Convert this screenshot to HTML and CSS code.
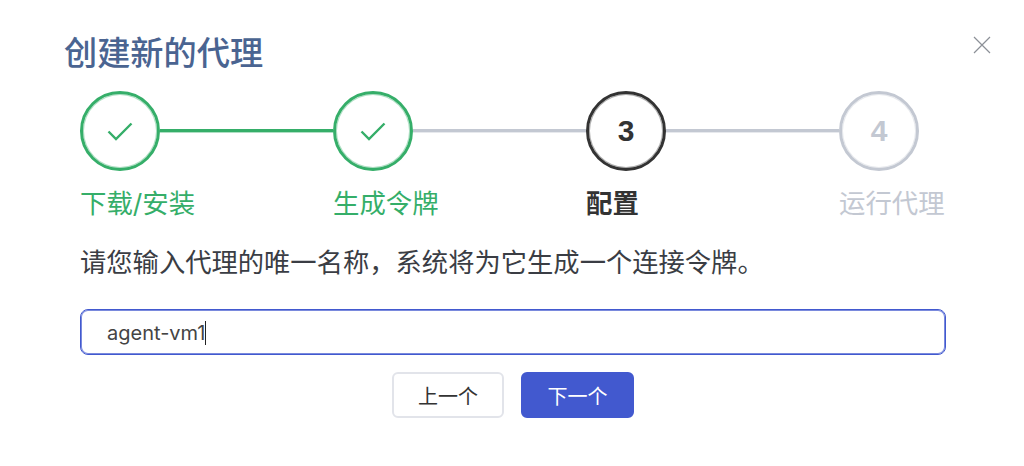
FILE: index.html
```html
<!DOCTYPE html>
<html lang="zh">
<head>
<meta charset="utf-8">
<title>创建新的代理</title>
<link rel="stylesheet" href="styles.css">
</head>
<body>
<div class="dialog">
  <header class="head">
    <h1 class="title">创建新的代理</h1>
    <button class="close" aria-label="关闭">
      <svg viewBox="0 0 18 18" width="18" height="18"><path d="M1 1L17 17M17 1L1 17" fill="none" stroke="#8c9097" stroke-width="1.2"/></svg>
    </button>
  </header>
  <div class="body">
    <div class="stepper">
      <div class="step done">
        <div class="track">
          <span class="circle"><svg viewBox="0 0 26 20" width="26" height="20"><path d="M1.5 10.5L9 18L24.5 2.5" fill="none" stroke="#35ae69" stroke-width="2.4"/></svg></span>
          <span class="line"></span>
        </div>
        <div class="label">下载/安装</div>
      </div>
      <div class="step done next-gray">
        <div class="track">
          <span class="circle"><svg viewBox="0 0 26 20" width="26" height="20"><path d="M1.5 10.5L9 18L24.5 2.5" fill="none" stroke="#35ae69" stroke-width="2.4"/></svg></span>
          <span class="line"></span>
        </div>
        <div class="label">生成令牌</div>
      </div>
      <div class="step active">
        <div class="track">
          <span class="circle">3</span>
          <span class="line"></span>
        </div>
        <div class="label">配置</div>
      </div>
      <div class="step pending">
        <div class="track">
          <span class="circle">4</span>
        </div>
        <div class="label">运行代理</div>
      </div>
    </div>
    <p class="desc">请您输入代理的唯一名称，系统将为它生成一个连接令牌。</p>
    <div class="input"><span>agent-vm1</span><span class="caret"></span></div>
    <div class="actions">
      <button class="btn">上一个</button>
      <button class="btn primary">下一个</button>
    </div>
  </div>
</div>
</body>
</html>
```

FILE: styles.css
```css
* { box-sizing: border-box; }
html, body { margin: 0; padding: 0; background: #fff; }
body {
  width: 1024px;
  height: 466px;
  overflow: hidden;
  font-family: "Inter", "Noto Sans CJK SC", sans-serif;
  color: #333;
}
.dialog { padding: 29px 0 0 64px; }
.head {
  display: flex;
  justify-content: space-between;
  align-items: flex-start;
  padding-right: 33px;
}
.title {
  margin: 0;
  font-size: 33.2px;
  line-height: 48px;
  font-weight: 500;
  color: #4a6491;
}
.close {
  border: 0;
  background: none;
  padding: 0;
  margin-top: 7px;
  width: 18px;
  height: 18px;
  display: block;
}
.close svg { display: block; }
.body { padding: 14px 78px 0 16px; }
.stepper { display: flex; }
.step { flex: 1 1 0; min-width: 0; }
.step.pending { flex: 0 0 107px; }
.track { display: flex; align-items: center; }
.circle {
  flex: none;
  width: 80px;
  height: 80px;
  border: 3px solid #35ae69;
  box-shadow: inset 0 0 0 1px rgba(53, 174, 105, 0.4);
  border-radius: 50%;
  display: flex;
  align-items: center;
  justify-content: center;
  font-size: 30px;
  font-weight: 700;
  font-family: "Liberation Sans", sans-serif;
}
.line { flex: 1; height: 3px; margin-top: -1px; background: #35ae69; box-shadow: 0 1px 0 rgba(53, 174, 105, 0.4); }
.next-gray .line, .active .line { background: #c3c8d2; box-shadow: 0 1px 0 rgba(195, 200, 210, 0.4); }
.active .circle { border-color: #333; color: #333; box-shadow: inset 0 0 0 1px rgba(51, 51, 51, 0.4); }
.pending .circle { border-color: #c3c8d2; color: #c3c8d2; box-shadow: inset 0 0 0 1px rgba(195, 200, 210, 0.4); }
.label {
  margin-top: 12px;
  font-size: 26.4px;
  line-height: 40px;
  white-space: nowrap;
}
.done .label { color: #35ae69; }
.active .label { color: #333; font-weight: 700; }
.pending .label { color: #c3c8d2; }
.desc {
  margin: 20px 0 0;
  font-size: 26.3px;
  line-height: 40px;
  color: #3a3d44;
  white-space: nowrap;
}
.input {
  margin-top: 26px;
  height: 46px;
  border: 1px solid #4259cf;
  box-shadow: inset 0 0 0 1px rgba(66, 89, 207, 0.7);
  border-radius: 8px;
  padding: 1px 0 0 26px;
  display: flex;
  align-items: center;
  font-size: 20px;
  color: #444;
}
.caret { width: 1px; height: 24px; background: #222; }
.actions {
  margin-top: 17px;
  display: flex;
  justify-content: center;
  gap: 17px;
}
.btn {
  width: 112px;
  height: 46px;
  border: 2px solid #e2e4ea;
  border-radius: 6px;
  background: #fff;
  font-family: "Noto Sans CJK SC", sans-serif;
  font-size: 20px;
  color: #333;
  padding: 0;
}
.btn.primary { width: 113px; background: #4259cf; border-color: #4259cf; color: #fff; }
```
